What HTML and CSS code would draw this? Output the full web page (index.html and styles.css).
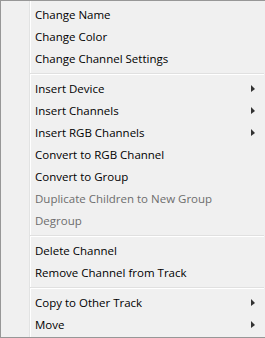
FILE: index.html
```html
<!DOCTYPE html>
<html lang="en">
<head>
  <meta charset="UTF-8">
  <title>Channel menu</title>
  <link rel="stylesheet" href="styles.css">
</head>
<body>

  <div class="menu">
    <div class="item">Change Name</div>
    <div class="item">Change Color</div>
    <div class="item">Change Channel Settings</div>
    <div class="sep"></div>

    <div class="item">Insert Device <span class="arrow"></span></div>
    <div class="item">Insert Channels <span class="arrow"></span></div>
    <div class="item">Insert RGB Channels <span class="arrow"></span></div>
    <div class="item">Convert to RGB Channel</div>
    <div class="item">Convert to Group</div>
    <div class="item disabled">Duplicate Children to New Group</div>
    <div class="item disabled">Degroup</div>
    <div class="sep"></div>

    <div class="item">Delete Channel</div>
    <div class="item">Remove Channel from Track</div>
    <div class="sep"></div>

    <div class="item">Copy to Other Track <span class="arrow"></span></div>
    <div class="item">Move <span class="arrow"></span></div>
  </div>

</body>
</html>
```

FILE: styles.css
```css
body {
  margin: 0;
  background: #f0f0f0;
}

.menu {
  width: 261px;
  height: 332px;
  padding: 2px;
  border: 1px solid #979797;
  background-color: #f0f0f0;
  /* left gutter line */
  background-image: linear-gradient(to right, transparent 28px, #e2e3e3 28px, #e2e3e3 29px, #fff 29px, #fff 30px, transparent 30px);
  font-family: "Open Sans", "Noto Sans", sans-serif;
  font-size: 11.5px;
  color: #000;
}

.item {
  display: flex;
  align-items: center;
  height: 22px;
  padding-left: 32px;
  padding-right: 9px;
  white-space: nowrap;
}

.disabled {
  color: #6d6d6d;
}

.arrow {
  margin-left: auto;
  width: 0;
  height: 0;
  border-top: 4px solid transparent;
  border-bottom: 3px solid transparent;
  border-left: 4px solid #333;
}

.sep {
  margin: 4px 0 2px 27px;
  border-top: 1px solid #e0e0e0;
  border-bottom: 1px solid #fff;
}
```
